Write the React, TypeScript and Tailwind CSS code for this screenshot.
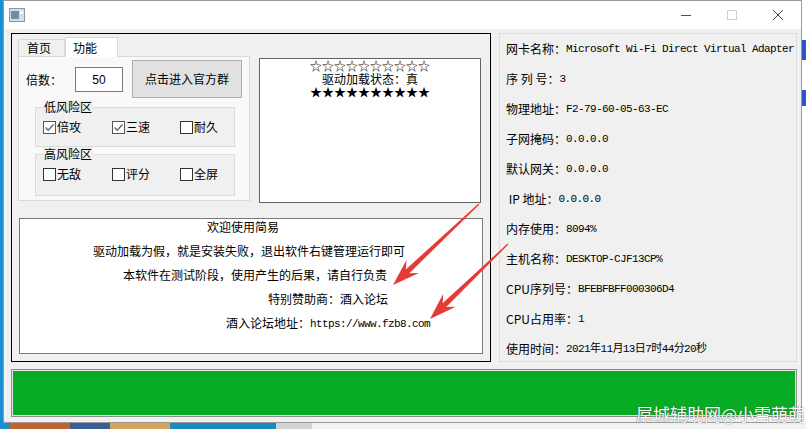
import React from 'react';

const cjk = "font-['SimSun','Noto_Sans_CJK_SC',sans-serif]";
const mono = "font-['Liberation_Mono','Noto_Sans_CJK_SC',monospace]";

type Pt = [number, number];

// tapered red arrow drawn from tail to tip
const arrowPoints = (tail: Pt, tip: Pt) => {
  const dx = tip[0] - tail[0];
  const dy = tip[1] - tail[1];
  const len = Math.hypot(dx, dy);
  const d: Pt = [dx / len, dy / len];
  const n: Pt = [-d[1], d[0]];
  const at = (back: number, side: number): Pt => [
    tip[0] - d[0] * back + n[0] * side,
    tip[1] - d[1] * back + n[1] * side,
  ];
  const pts: Pt[] = [
    [tail[0] + n[0] * 0.6, tail[1] + n[1] * 0.6],
    at(20, 2.6),
    at(27, 9),
    tip,
    at(27, -9),
    at(20, -2.6),
    [tail[0] - n[0] * 0.6, tail[1] - n[1] * 0.6],
  ];
  return pts.map((p) => p.join(',')).join(' ');
};

const CheckBox: React.FC<{ label: string; checked?: boolean; w: string }> = ({ label, checked, w }) => (
  <div className={`flex items-center ${w}`}>
    <div className={`w-[13px] h-[13px] border bg-white flex items-center justify-center ${checked ? 'border-[#555]' : 'border-[#333]'}`}>
      {checked && (
        <svg width="11" height="11" viewBox="0 0 11 11">
          <path d="M1.5 5.5 L4.2 8.2 L9.5 2.5" fill="none" stroke="#666" strokeWidth="1.4" />
        </svg>
      )}
    </div>
    <span className="ml-[1px] text-[12px] text-black">{label}</span>
  </div>
);

const Group: React.FC<{ title: string; children: React.ReactNode; h: string; mt: string }> = ({ title, children, h, mt }) => (
  <div className={`relative ${mt} ml-[16px] w-[200px] ${h} border border-[#dcdcdc] bg-[#f0f0f0]`}>
    <span className="absolute -top-[8px] left-[7px] px-[1px] bg-[#f0f0f0] text-[12px] leading-[14px] text-black">{title}</span>
    <div className="flex pl-[7px] pt-[10px]">{children}</div>
  </div>
);

const infoRows: [string, string][] = [
  ['网卡名称：', 'Microsoft Wi-Fi Direct Virtual Adapter'],
  ['序 列 号：', '3'],
  ['物理地址：', 'F2-79-60-05-63-EC'],
  ['子网掩码：', '0.0.0.0'],
  ['默认网关：', '0.0.0.0'],
  ['\u00a0IP 地址：', '0.0.0.0'],
  ['内存使用：', '8094%'],
  ['主机名称：', 'DESKTOP-CJF13CP%'],
  ['CPU序列号：', 'BFEBFBFF000306D4'],
  ['CPU占用率：', '1'],
  ['使用时间：', '2021年11月13日7时44分20秒'],
];

export default function App() {
  return (
    <div className={`relative w-[806px] h-[429px] overflow-hidden bg-[#f3f3f3] ${cjk}`}>
      <div className="flex h-[423px]">
        <div className="w-[3px] bg-[#1b8fd2]" />

        {/* main window */}
        <div className="w-[799px] flex flex-col bg-[#f0f0f0] border border-[#9a9a9a]">
          <div className="h-[28px] bg-white flex items-center">
            <svg className="ml-[5px]" width="16" height="16" viewBox="0 0 16 16">
              <rect x="0.5" y="1.5" width="15" height="13" fill="#d8dde2" stroke="#8a96a0" />
              <rect x="2" y="4" width="8" height="8" fill="#6d8fa3" />
              <rect x="11" y="4" width="3" height="3" fill="#ffffff" />
            </svg>
            <div className="ml-auto flex items-center h-full">
              <div className="w-[46px] h-full flex items-center justify-center">
                <div className="w-[10px] h-px bg-[#555]" />
              </div>
              <div className="w-[46px] h-full flex items-center justify-center">
                <div className="w-[10px] h-[10px] border border-[#cfcfcf]" />
              </div>
              <div className="w-[46px] h-full flex items-center justify-center">
                <svg width="12" height="12" viewBox="0 0 12 12">
                  <path d="M1 1 L11 11 M11 1 L1 11" stroke="#444" strokeWidth="1" />
                </svg>
              </div>
            </div>
          </div>

          <div className="flex mt-[4px] ml-[7px]">
            {/* left area */}
            <div className="w-[480px] h-[329px] border border-black flex flex-col">
              <div className="flex">
                {/* tab control */}
                <div className="ml-[6px] mt-[2px] w-[232px] flex flex-col">
                  <div className="flex items-end h-[20px]">
                    <div className="w-[47px] h-[17px] border border-b-0 border-[#d9d9d9] bg-[#f0f0f0] flex items-center pl-[8px] text-[12px] text-black">首页</div>
                    <div className="w-[53px] h-[20px] border border-b-0 border-[#d9d9d9] bg-white flex items-center pl-[7px] text-[12px] text-black -mb-px relative">功能</div>
                  </div>
                  <div className="h-[145px] border border-[#d9d9d9] bg-[#f9f9f9] flex flex-col">
                    <div className="flex">
                      <div className="flex items-center mt-[10px] h-[25px]">
                        <span className="ml-[7px] text-[12px] text-black">倍数：</span>
                        <div className="ml-[13px] w-[48px] h-[25px] border border-[#7a7a7a] bg-white flex items-center justify-center font-['Liberation_Sans',sans-serif] text-[12px] text-black">50</div>
                      </div>
                      <div className="ml-[9px] mt-[3px] w-[110px] h-[38px] border border-[#adadad] bg-[#e1e1e1] flex items-center justify-center text-[12px] text-black">点击进入官方群</div>
                    </div>
                    <Group title="低风险区" h="h-[40px]" mt="mt-[9px]">
                      <CheckBox label="倍攻" checked w="w-[69px]" />
                      <CheckBox label="三速" checked w="w-[68px]" />
                      <CheckBox label="耐久" w="w-[50px]" />
                    </Group>
                    <Group title="高风险区" h="h-[42px]" mt="mt-[7px]">
                      <CheckBox label="无敌" w="w-[69px]" />
                      <CheckBox label="评分" w="w-[68px]" />
                      <CheckBox label="全屏" w="w-[50px]" />
                    </Group>
                  </div>
                </div>

                {/* driver status */}
                <div className="ml-[9px] mt-[24px] w-[222px] h-[145px] border border-[#646464] bg-white flex flex-col items-center text-[12px] leading-[13px] text-black">
                  <span>☆☆☆☆☆☆☆☆☆☆</span>
                  <span>驱动加载状态：真</span>
                  <span>★★★★★★★★★★</span>
                </div>
              </div>

              {/* notice */}
              <div className="ml-[7px] mt-[15px] w-[464px] h-[136px] border border-[#7a7a7a] bg-white flex flex-col text-[12px] text-black">
                <div className="h-[17px] flex items-end pl-[187px]">欢迎使用简易</div>
                <div className="h-[24px] flex items-end pl-[73px]">驱动加载为假，就是安装失败，退出软件右键管理运行即可</div>
                <div className="h-[24px] flex items-end pl-[103px]">本软件在测试阶段，使用产生的后果，请自行负责</div>
                <div className="h-[24px] flex items-end pl-[248px]">特别赞助商：酒入论坛</div>
                <div className="h-[24px] flex items-end pl-[206px]">
                  酒入论坛地址：<span className={`${mono} text-[11px] tracking-[-0.6px]`}>https://www.fzb8.com</span>
                </div>
              </div>
            </div>

            {/* system info */}
            <div className="ml-[8px] w-[298px] h-[329px] border border-[#dcdcdc] bg-[#f0f0f0] flex flex-col pl-[6px] text-[12px] text-black">
              {infoRows.map(([k, v]) => (
                <div key={k} className="h-[30px] shrink-0 flex items-center whitespace-nowrap">
                  <span>{k}</span>
                  <span className={`${mono} text-[11px] tracking-[-0.6px]`}>{v}</span>
                </div>
              ))}
            </div>
          </div>

          {/* progress strip */}
          <div className="mt-[7px] ml-[7px] w-[786px] h-[48px] border border-[#8c8c8c] p-px bg-[#e6e6e6]">
            <div className="w-full h-full bg-[#07ac24]" />
          </div>
        </div>

        <div className="w-[4px] flex flex-col bg-white">
          <div className="h-[40px]" />
          <div className="h-[20px] bg-[#2d54c8]" />
          <div className="h-[30px]" />
          <div className="h-[16px] bg-[#2d54c8]" />
        </div>
      </div>

      {/* desktop strip below the window */}
      <div className="flex h-[6px]">
        <div className="w-[10px] bg-[#1b8fd2]" />
        <div className="w-[60px] bg-[#c0632c]" />
        <div className="w-[40px] bg-[#3b5e9a]" />
        <div className="w-[60px] bg-[#d6a35a]" />
        <div className="w-[106px] bg-[#1a8ac4]" />
        <div className="w-[36px] bg-[#d2d2d2]" />
        <div className="flex-1 bg-[#f2f2f2]" />
      </div>

      <svg className="absolute inset-0 pointer-events-none" width="806" height="429">
        <polygon points={arrowPoints([479, 204], [393, 285])} fill="#e63b35" />
        <polygon points={arrowPoints([508, 244], [430, 319])} fill="#e63b35" />
      </svg>

      <div className="absolute left-[636px] top-[404px] whitespace-nowrap text-[17px] leading-[20px] text-white [text-shadow:0_0_1px_#333]">屌城辅助网@小雪萌萌</div>
    </div>
  );
}
